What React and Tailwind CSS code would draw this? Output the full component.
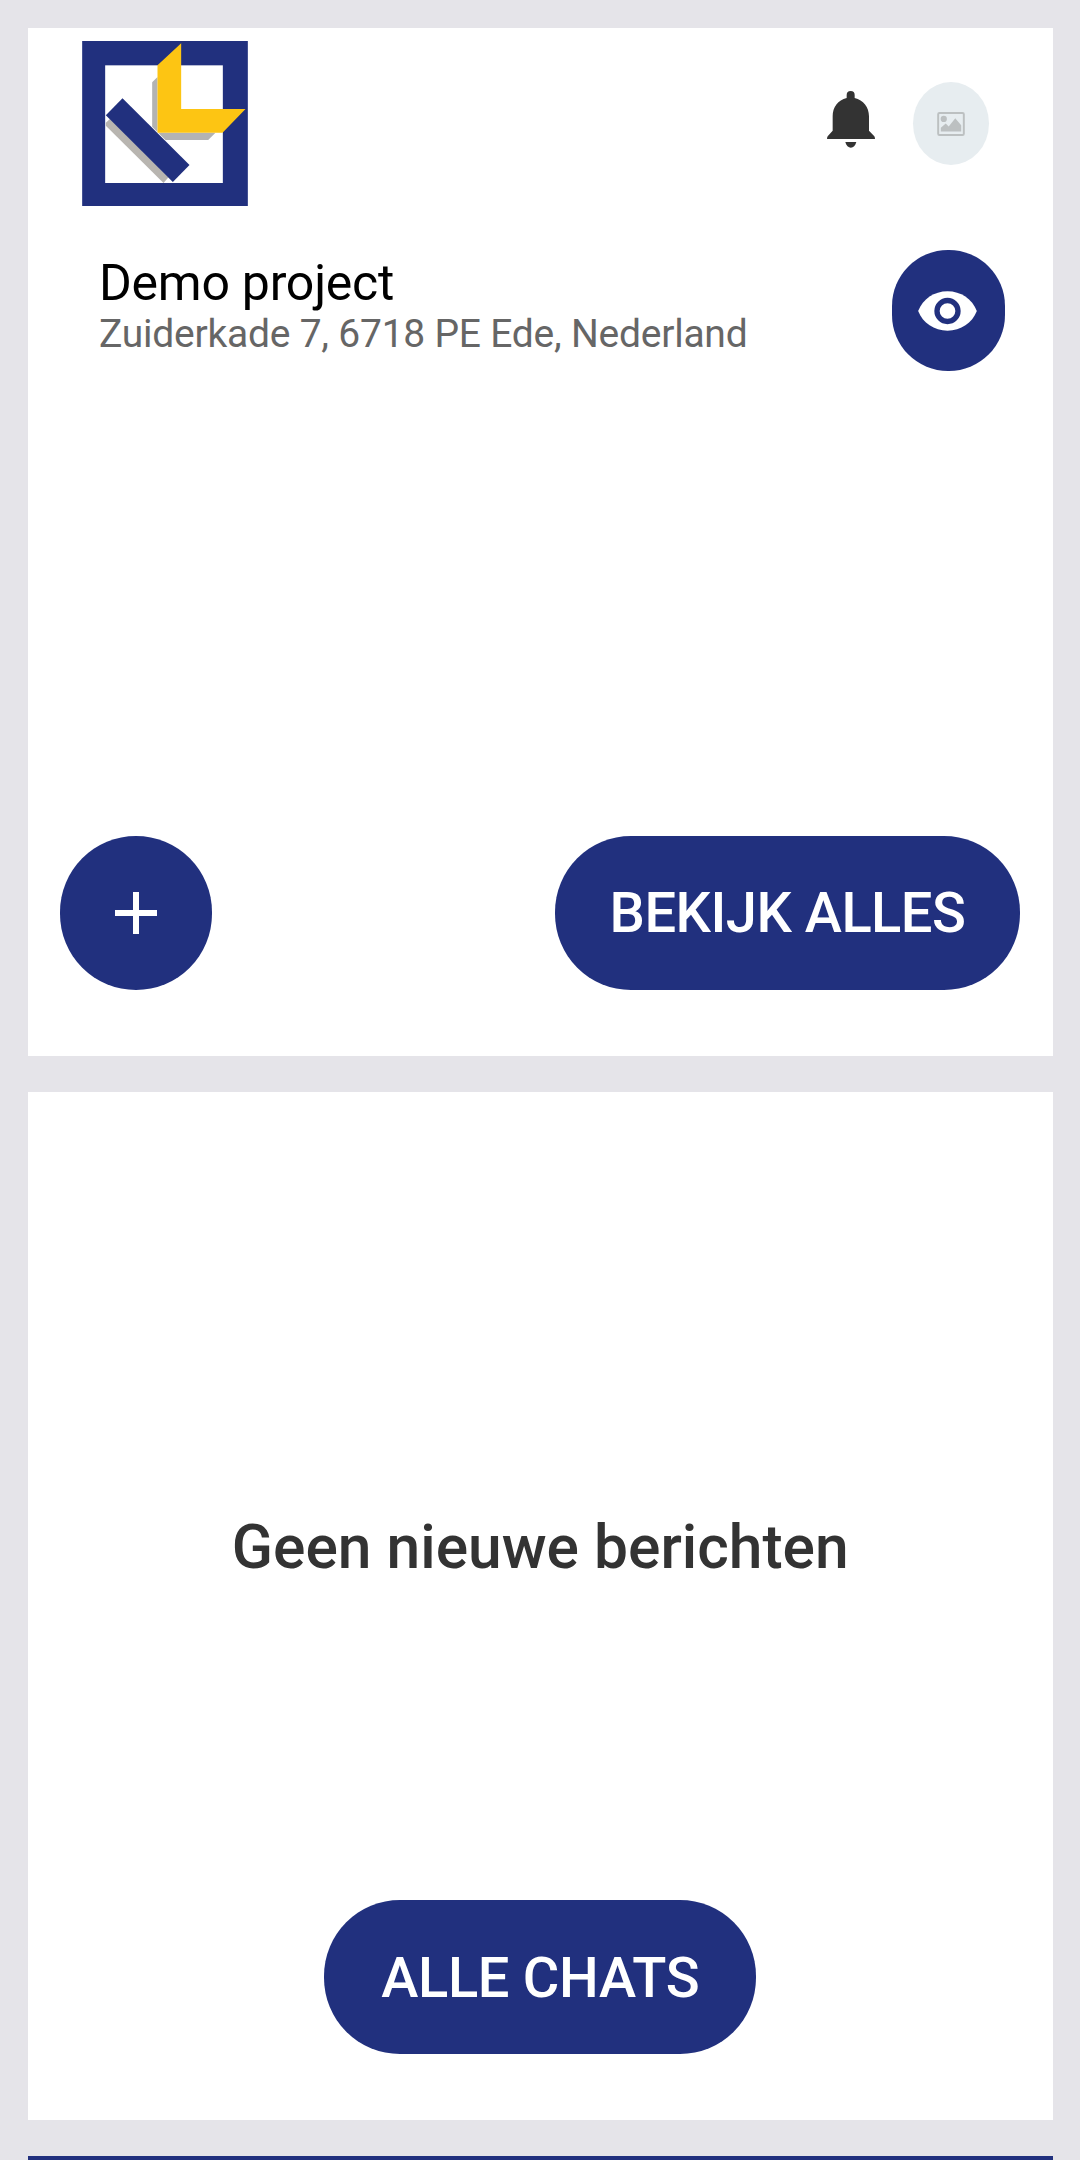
function Logo() {
  return (
    <svg viewBox="246 123 497 495" className="w-[166px] h-[165px]">
      <rect x="246" y="123" width="497" height="495" fill="#21307e" />
      <rect x="315" y="196" width="353" height="353" fill="#fff" />
      <path d="M317 377L317 368L330 356L505 532L490 549Z" fill="#b8b5b0" />
      <path d="M456 247L472 231V398H646L624 420H496L456 380Z" fill="#b3b3b3" />
      <path d="M367 295L568 495L518 546L317 346Z" fill="#21307e" />
      <path d="M543 130V327H736L667 398H472V196Z" fill="#fdc513" />
    </svg>
  );
}

function BellIcon() {
  return (
    <svg viewBox="142 153 144 171" className="w-12 h-[57px]" fill="#333">
      <path d="M201 165A12 12 0 0 1 225 165V174C251 181 268 201 268 229V272L284 289Q286 292 286 297H142Q142 292 144 289L159 272V229C159 201 175 181 201 174Z" />
      <path d="M197 306H230C227 317 221 323 213.500 323S200 317 197 306Z" />
    </svg>
  );
}

function ImageIcon() {
  return (
    <svg viewBox="473 215 84 73" className="w-7 h-6">
      <rect
        x="476"
        y="218"
        width="78"
        height="67"
        rx="4"
        fill="none"
        stroke="#bcc0c1"
        strokeWidth="6"
      />
      <circle cx="493" cy="236" r="9.500" fill="#bcc0c1" />
      <path d="M484 274V263L499 250L508 259L528 234L546 255V274Z" fill="#bcc0c1" />
    </svg>
  );
}

function EyeIcon() {
  return (
    <svg viewBox="174 183 176 120" className="w-[59px] h-10">
      <path
        d="M174 243C188 207 222 184 262 184S336 207 350 243C336 279 302 302 262 302S188 279 174 243Z"
        fill="#fff"
      />
      <circle cx="262" cy="243" r="31.500" fill="#fff" stroke="#21307e" strokeWidth="16" />
    </svg>
  );
}

function PlusIcon() {
  return (
    <svg viewBox="0 0 42 42" className="size-[42px]" stroke="#fff" strokeWidth="6">
      <path d="M0 21H42M21 0V42" />
    </svg>
  );
}

function PillButton({ children, className }) {
  return (
    <button
      className={`flex h-[154px] items-center justify-center rounded-[76px] bg-[#21307e] text-[56px] font-medium whitespace-nowrap text-white ${className}`}
    >
      {children}
    </button>
  );
}

function ProjectCard() {
  return (
    <section className="flex h-[1028px] flex-col bg-white">
      <header className="flex items-start justify-between pt-[13px] pr-[64px] pl-[54px]">
        <Logo />
        <div className="flex items-start gap-[38px] pt-[41px]">
          <div className="pt-[9px]">
            <BellIcon />
          </div>
          <div className="flex h-[83px] w-[76px] items-center justify-center rounded-[50%] bg-[#e7edf0]">
            <ImageIcon />
          </div>
        </div>
      </header>

      <div className="mt-11 flex items-start justify-between pr-12 pl-[71.5px]">
        <div className="pt-[3px]">
          <h1 className="text-[50px] leading-[60px] tracking-[-0.25px] text-black">
            Demo project
          </h1>
          <p className="pt-px text-[39px] leading-[40px] tracking-[-0.23px] text-[#666]">
            Zuiderkade 7, 6718 PE Ede, Nederland
          </p>
        </div>
        <button className="flex h-[121px] w-[113px] items-center justify-center rounded-[56px] bg-[#21307e] pr-[2px]">
          <EyeIcon />
        </button>
      </div>

      <div className="mt-auto flex justify-between pr-[33px] pb-[66px] pl-[32.5px]">
        <button className="flex h-[154px] w-[152px] items-center justify-center rounded-full bg-[#21307e]">
          <PlusIcon />
        </button>
        <PillButton className="w-[465px] tracking-[-0.5px]">BEKIJK ALLES</PillButton>
      </div>
    </section>
  );
}

function MessagesCard() {
  return (
    <section className="flex h-[1028px] flex-col items-center bg-white pb-[66px]">
      <p className="mt-[421px] text-[60.5px] leading-[70px] font-medium text-[#333]">
        Geen nieuwe berichten
      </p>
      <PillButton className="mt-auto w-[432px] pt-px tracking-[-0.3px]">ALLE CHATS</PillButton>
    </section>
  );
}

export default function App() {
  return (
    <div className="flex h-[2160px] w-[1080px] flex-col gap-9 overflow-hidden bg-[#e5e4e9] pt-7 pr-[27px] pl-[27.5px] font-['Roboto',sans-serif]">
      <ProjectCard />
      <MessagesCard />
      <div className="h-1 bg-[#21307e]" />
    </div>
  );
}
